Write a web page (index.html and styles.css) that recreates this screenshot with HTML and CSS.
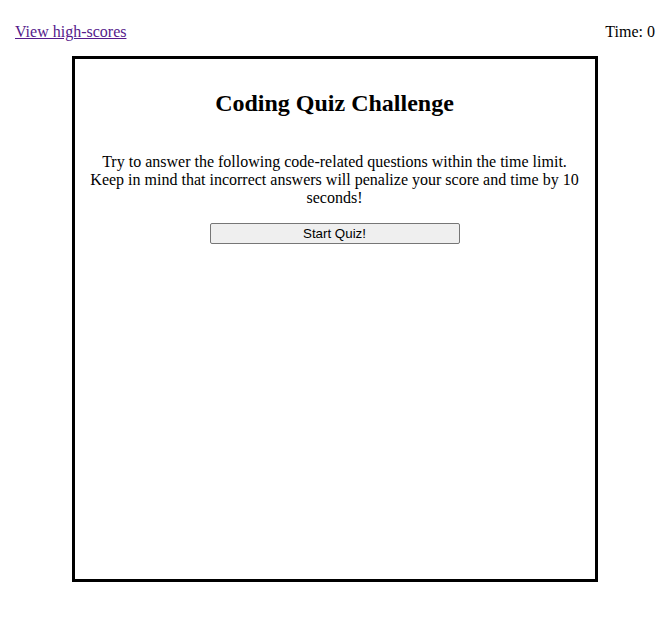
FILE: index.html
```html
<!DOCTYPE html>
<html lang="en">
<head>
<meta charset="utf-8">
<title>Coding Quiz Challenge</title>
<link rel="stylesheet" href="styles.css">
</head>
<body>
<header class="top-bar">
  <a class="scores-link" href="#">View high-scores</a>
  <span class="timer">Time: 0</span>
</header>
<main class="quiz-box">
  <h2 class="quiz-title">Coding Quiz Challenge</h2>
  <p class="quiz-intro">Try to answer the following code-related questions within the time limit. Keep in mind that incorrect answers will penalize your score and time by 10 seconds!</p>
  <button class="start-btn" type="button">Start Quiz!</button>
</main>
</body>
</html>
```

FILE: styles.css
```css
body {
  margin: 8px;
  font-family: "Liberation Serif", "Times New Roman", serif;
  font-size: 16px;
  color: #000;
  background: #fff;
}

.top-bar {
  display: flex;
  justify-content: space-between;
  align-items: center;
  padding: 15px 6px 15px 7px;
}

.scores-link {
  color: #551a8b;
  text-decoration: underline;
}

.quiz-box {
  box-sizing: border-box;
  width: 526px;
  height: 526px;
  margin: 0 auto;
  border: 3px solid #000;
  padding: 11px 15px 10px;
  display: flex;
  flex-direction: column;
  align-items: center;
  text-align: center;
}

.quiz-title {
  font-size: 24px;
  font-weight: bold;
  margin: 20px 0;
}

.quiz-intro {
  margin: 16px 0;
}

.start-btn {
  box-sizing: border-box;
  width: 250px;
  height: 21px;
  font-family: "Liberation Sans", Arial, sans-serif;
  font-size: 13.33px;
  color: #000;
  background: #efefef;
  border: 1px solid #767676;
  border-radius: 2px;
  padding: 1px 6px;
}
```
